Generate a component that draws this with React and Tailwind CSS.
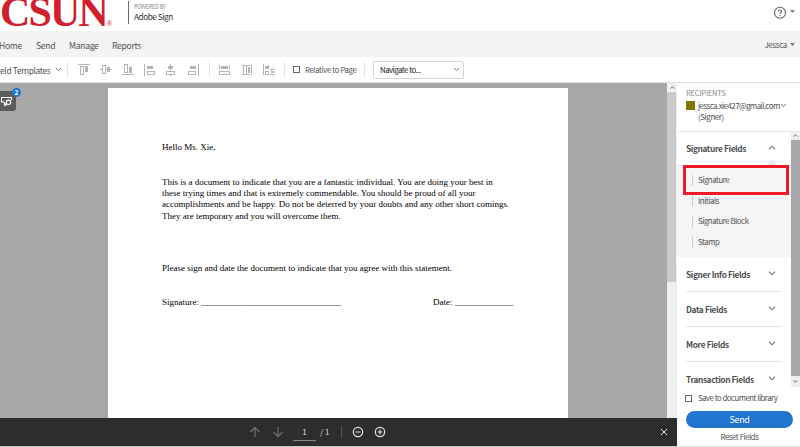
import React from "react";

const SANS = "font-['Noto_Sans_CJK_SC',sans-serif]";

function Icon({ w = 14, children, className = "" }) {
  return (
    <svg width={w} height="14" viewBox={`0 0 ${w} 14`} fill="none" stroke="#b4b4b4" className={"shrink-0 " + className}>
      {children}
    </svg>
  );
}

function Chevron({ up, className = "", size = 8, color = "#6e6e6e" }) {
  return (
    <svg width={size} height="5" viewBox="0 0 8 5" fill="none" stroke={color} strokeWidth="1.1" className={"shrink-0 " + className}>
      <path d={up ? "M1 4.3 4 1.2 7 4.3" : "M1 .7 4 3.8 7 .7"} />
    </svg>
  );
}

function Header() {
  return (
    <header className="flex h-[31px] shrink-0 bg-white">
      <div className="w-[107px] h-[31px] shrink-0 whitespace-nowrap font-['Liberation_Serif',serif] font-bold text-[42px] leading-[24px] tracking-[-1.9px] text-[#d0202e]">CSUN</div>
      <div className="w-[21px] shrink-0 pt-[20px] text-[7px] leading-[8px] text-[#d0202e] font-['Liberation_Sans',sans-serif]">®</div>
      <div className="mt-[1px] h-[23px] w-px bg-[#6a6a6a]" />
      <div className={"ml-[5px] whitespace-nowrap " + SANS}>
        <div className="mt-[3px] text-[5.5px] leading-[8px] tracking-[-0.2px] text-[#888]">POWERED BY</div>
        <div className="text-[8.2px] leading-[11px] tracking-[-0.45px] text-[#2e2e2e]">Adobe Sign</div>
      </div>
      <svg className="ml-auto mt-[6px] mr-[4px] shrink-0" width="23" height="14" viewBox="0 0 23 14">
        <circle cx="7" cy="6.7" r="5.5" fill="none" stroke="#666" strokeWidth="1.1" />
        <path d="M5.5 5.6c0-2 3-2 3-.2 0 1.2-1.5 1.1-1.5 2.6M7 9v1" fill="none" stroke="#666" strokeWidth="1.1" />
        <path d="M17 4.2h5l-2.5 2.6z" fill="#666" />
      </svg>
    </header>
  );
}

function Nav() {
  return (
    <nav className={"flex h-[26px] shrink-0 items-center bg-[#f3f3f3] pt-px text-[8.6px] leading-[26px] tracking-[-0.3px] text-[#555] whitespace-nowrap " + SANS}>
      <span className="w-[37px] -ml-px">Home</span>
      <span className="w-[33px]">Send</span>
      <span className="w-[43px]">Manage</span>
      <span>Reports</span>
      <span className="ml-auto mr-[3px] text-[8px] tracking-[-0.35px]">Jessca</span>
      <svg width="5" height="3" viewBox="0 0 5 3" className="mr-[5px]"><path d="M0 0h5L2.5 3z" fill="#777" /></svg>
    </nav>
  );
}

function Toolbar() {
  return (
    <div className={"flex h-[26px] shrink-0 items-center border-b border-[#ddd] bg-white text-[#505050] whitespace-nowrap " + SANS}>
      <div className="flex w-[55px] shrink-0 text-[8.4px] leading-[26px] tracking-[-0.32px]">eld Templates</div>
      <Chevron size={7} />
      <div className="ml-[5px] h-[15px] w-px bg-[#e4e4e4]" />
      <Icon w={14} className="ml-[9px]"><path d="M1 1.5h12" /><rect x="3.5" y="3.5" width="3" height="8" /><rect x="8.5" y="3.5" width="2" height="5" fill="#b4b4b4" /></Icon>
      <Icon w={14} className="ml-[8px]"><path d="M1 6.5h2M7 6.5h6" /><rect x="3.5" y="2.5" width="3" height="8" /><rect x="8.5" y="4.5" width="2" height="4" fill="#b4b4b4" /></Icon>
      <Icon w={14} className="ml-[8px]"><path d="M1 11.5h12" /><rect x="3.5" y="1.5" width="3" height="8" /><rect x="8.5" y="4.5" width="2" height="5" fill="#b4b4b4" /></Icon>
      <Icon w={14} className="ml-[8px]"><path d="M1.5 1v12" /><rect x="4.5" y="3.5" width="5" height="2" fill="#b4b4b4" /><rect x="4.5" y="8.5" width="7" height="3" /></Icon>
      <Icon w={14} className="ml-[7px]"><path d="M6.5 1v7M6.5 11v2" /><rect x="4.5" y="3.5" width="4" height="2" fill="#b4b4b4" /><rect x="2.5" y="8.5" width="8" height="3" /></Icon>
      <Icon w={14} className="ml-[8px]"><path d="M12.5 1v12" /><rect x="4.5" y="3.5" width="5" height="2" fill="#b4b4b4" /><rect x="2.5" y="8.5" width="7" height="3" /></Icon>
      <div className="ml-[9px] h-[15px] w-px bg-[#e4e4e4]" />
      <Icon w={13} className="ml-[8px]"><path d="M1.5 2v4M11.5 2v4" /><rect x="3.5" y="3.5" width="6" height="2" fill="#b4b4b4" /><rect x="1.5" y="8.5" width="10" height="3" /></Icon>
      <Icon w={12} className="ml-[10px]"><path d="M1 2.5h4M6 2.5h3M1 11.5h4M6 11.5h3M10.5 2v10" /><rect x="2.5" y="2.5" width="3" height="9" /><rect x="7.5" y="4.5" width="1" height="5" fill="#b4b4b4" /></Icon>
      <Icon w={13} className="ml-[9px]"><path d="M1.5 1v11M8 6.5h5M8 11.5h5M6.5 2v4" /><rect x="3.5" y="3.5" width="2" height="2" fill="#b4b4b4" /><rect x="3.5" y="8.5" width="3" height="3" /><path d="M9 9h3" strokeWidth="2" /></Icon>
      <div className="ml-[9px] h-[15px] w-px bg-[#e4e4e4]" />
      <div className="ml-[8px] size-[7px] border border-[#666]" />
      <div className="ml-[5px] w-[59px] text-[7.7px] leading-[26px] tracking-[-0.35px]">Relative to Page</div>
      <div className="h-[15px] w-px bg-[#e4e4e4]" />
      <div className="ml-[8px] flex h-[18px] w-[91px] items-center justify-between rounded-[2px] border border-[#d6d6d6] pl-[6px] pr-[3px] text-[7.8px] leading-[16px] tracking-[-0.5px] text-[#222]">
        Navigate to...
        <Chevron size={7} />
      </div>
    </div>
  );
}

function Letter() {
  return (
    <article className="ml-[108px] h-[330px] w-[460px] bg-white pl-[54px] pt-[54px] font-['Liberation_Serif',serif] text-[9.02px] leading-[11.2px] whitespace-nowrap text-black">
      <p>Hello Ms. Xie,</p>
      <p className="mt-[23.8px]">
        This is a document to indicate that you are a fantastic individual. You are doing your best in<br />
        these trying times and that is extremely commendable. You should be proud of all your<br />
        accomplishments and be happy. Do not be deterred by your doubts and any other short comings.<br />
        They are temporary and you will overcome them.
      </p>
      <p className="mt-[41px]">Please sign and date the document to indicate that you agree with this statement.</p>
      <p className="mt-[23px] flex">
        <span className="w-[271px]">Signature: _______________________________</span>
        <span>Date: _____________</span>
      </p>
    </article>
  );
}

function Viewer() {
  return (
    <section className="flex w-[677px] shrink-0 flex-col">
      <div className="flex h-[335px] shrink-0">
        <div className="relative w-[667px] bg-[#a8a8a8] pt-[5px]">
          <Letter />
          <div className="absolute left-0 top-[8px] flex h-[20px] w-[16px] items-center rounded-r-[3px] bg-[#5c5c5c]">
            <svg width="14" height="14" viewBox="0 0 14 14" fill="none" stroke="#fff" strokeWidth="1.1">
              <path d="M4.5 8H1.5V3.5h10V6M4.5 8v3l1.5-1.5" /><circle cx="8.5" cy="8.3" r="2.2" /><path d="M7 10 5.3 12" />
            </svg>
          </div>
          <div className={"absolute left-[12px] top-[5px] size-[9px] rounded-full bg-[#2174cf] text-center text-[6.5px] font-bold leading-[9px] text-white " + SANS}>2</div>
        </div>
        <div className="w-[10px] bg-[#efefef]">
          <div className="flex h-[9px] items-center justify-center"><Chevron up size={5} color="#333" /></div>
          <div className="mr-px h-[190px] bg-[#cacaca]" />
        </div>
      </div>
      <div className={"flex h-[28px] items-center bg-[#2d2d2d] text-[8px] text-[#ddd] " + SANS}>
        <svg width="36" height="12" viewBox="0 0 36 12" className="ml-[249px]" fill="none" stroke="#777" strokeWidth="1.1">
          <path d="M6 11V1.5M1.5 6 6 1.5 10.5 6M29 1v9.5M24.5 6 29 10.5 33.5 6" />
        </svg>
        <div className="ml-[8px] mt-px h-[16px] w-[23px] border-b border-[#888] text-center leading-[14px]">1</div>
        <div className="ml-[4px] w-[21px] leading-[14px] whitespace-pre">/ 1</div>
        <div className="h-[12px] w-px bg-[#555]" />
        <svg width="36" height="14" viewBox="0 0 36 14" className="ml-[9px]" fill="none" stroke="#e4e4e4" strokeWidth="1.2">
          <circle cx="7" cy="7" r="4.7" /><path d="M4.5 7h5M26.5 7h5M29 4.5v5" /><circle cx="29" cy="7" r="4.7" />
        </svg>
        <svg width="8" height="8" viewBox="0 0 8 8" className="ml-auto mr-[9px]" stroke="#ddd"><path d="m1 1 6 6M7 1 1 7" /></svg>
      </div>
      <div className="h-px bg-[#c8c8c8]" />
    </section>
  );
}

function Group({ title }) {
  return (
    <div className="mx-[9px] flex h-[35px] shrink-0 items-center justify-between border-b border-[#e4e4e4] pr-[6px] last:h-[34px] last:border-0">
      <span>{title}</span>
      <Chevron className="-mt-[1px]" />
    </div>
  );
}

function FieldItem({ label }) {
  return (
    <div className="flex h-[20.6px] items-center">
      <span className="mr-[5px] h-[11px] w-px bg-[#ccc]" />
      {label}
    </div>
  );
}

function Sidebar() {
  return (
    <aside className={"flex w-[123px] shrink-0 flex-col bg-white whitespace-nowrap text-[#505050] " + SANS}>
      <div className="h-[48px] shrink-0 pl-[9px] pt-[4px]">
        <div className="text-[7.5px] leading-[12px] tracking-[-0.2px] text-[#888]">RECIPIENTS</div>
        <div className="flex h-[13px] items-center text-[8px] leading-[13px] tracking-[-0.6px]">
          <span className="mr-[3px] size-[9px] bg-[#857600]" />
          <span className="w-[81px]">jessca.xie427@gmail.com</span>
          <Chevron size={7} className="ml-px" />
        </div>
        <div className="pl-[12px] text-[8px] leading-[10px] tracking-[-0.45px]">(Signer)</div>
      </div>
      <div className="flex h-[256px] shrink-0">
        <div className="flex w-[114px] flex-col text-[8.3px] font-bold tracking-[-0.37px]">
          <div className="relative flex h-[35px] shrink-0 items-center justify-between border-y border-[#e4e4e4] pl-[9px] pr-[15px]">
            <span>Signature Fields</span><Chevron up className="-mt-[3px]" />
            <svg width="12" height="6" viewBox="0 0 12 6" className="absolute bottom-[-1px] right-[13px]"><path d="M0 6 6 0l6 6z" fill="#ececec" /></svg>
          </div>
          <div className="relative flex h-[91px] shrink-0 flex-col bg-[#f5f5f5] pl-[15px] pt-[4px] text-[7.8px] font-normal leading-[10px] tracking-[-0.45px]">
            <FieldItem label="Signature" />
            <FieldItem label="Initials" />
            <FieldItem label="Signature Block" />
            <FieldItem label="Stamp" />
            <div className="absolute left-[6px] top-[-1px] h-[30px] w-[106px] border-[3px] border-[#ed1c24]" />
          </div>
          <Group title="Signer Info Fields" />
          <Group title="Data Fields" />
          <Group title="More Fields" />
          <Group title="Transaction Fields" />
        </div>
        <div className="flex w-[9px] flex-col bg-[#efefef]">
          <div className="flex h-[9px] items-center justify-center"><Chevron up size={5} color="#333" /></div>
          <div className="h-[236px] bg-[#a8a8a8]" />
          <div className="flex flex-1 items-center justify-center"><Chevron size={5} color="#333" /></div>
        </div>
      </div>
      <div className="flex flex-1 flex-col">
        <div className="ml-[8px] mt-[5px] flex h-[12px] items-center text-[7.8px] leading-[12px] tracking-[-0.5px]">
          <span className="mr-[6px] size-[7px] border border-[#666]" />Save to document library
        </div>
        <button className="ml-[9px] mt-[7px] h-[17px] w-[107px] shrink-0 rounded-full bg-[#2174cf] text-[9px] leading-[18px] tracking-[-0.3px] text-white">Send</button>
        <div className="ml-[9px] w-[107px] text-center text-[7.8px] leading-[17px] tracking-[-0.45px]">Reset Fields</div>
      </div>
      <div className="h-px bg-[#e4e4e4]" />
    </aside>
  );
}

export default function App() {
  return (
    <div className="flex h-[447px] w-[800px] flex-col bg-white">
      <Header />
      <Nav />
      <Toolbar />
      <main className="flex min-h-0 flex-1">
        <Viewer />
        <Sidebar />
      </main>
    </div>
  );
}
